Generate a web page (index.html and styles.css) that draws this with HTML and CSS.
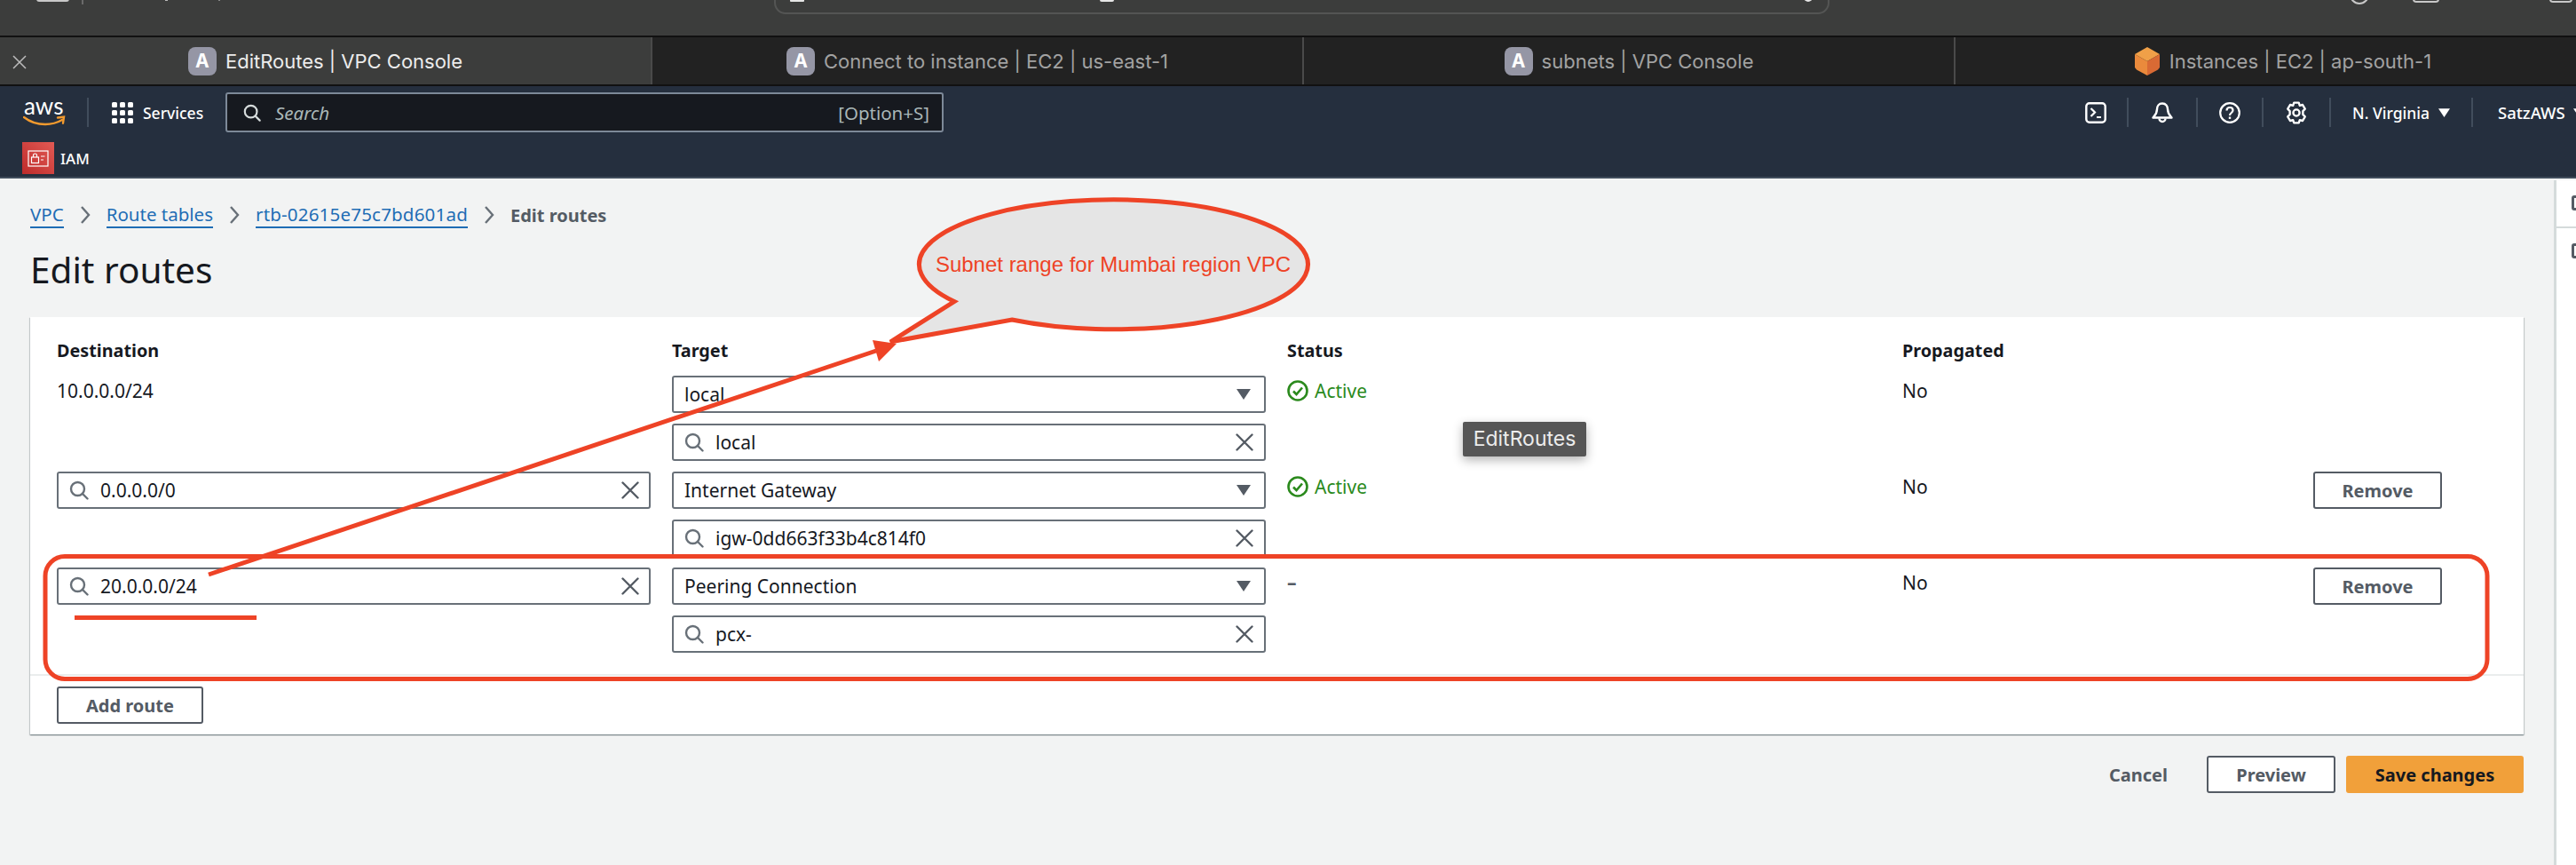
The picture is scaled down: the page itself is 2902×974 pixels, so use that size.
FILE: index.html
```html
<!DOCTYPE html>
<html lang="en">
<head>
<meta charset="utf-8">
<title>EditRoutes | VPC Console</title>
<link rel="stylesheet" href="styles.css">
</head>
<body>
<svg class="defs" width="0" height="0" aria-hidden="true">
  <symbol id="i-search" viewBox="0 0 22 22"><circle cx="9.5" cy="9.5" r="7.5" fill="none" stroke="currentColor" stroke-width="2.4"/><path d="M15 15l5.5 5.5" fill="none" stroke="currentColor" stroke-width="2.4" stroke-linecap="round"/></symbol>
  <symbol id="i-x" viewBox="0 0 20 20"><path d="M1.5 1.5l17 17M18.500 1.500l-17 17" fill="none" stroke="currentColor" stroke-width="2.400" stroke-linecap="round"/></symbol>
  <symbol id="i-caret" viewBox="0 0 16 12"><path d="M0 0h16l-8 12z" fill="currentColor"/></symbol>
  <symbol id="i-chev" viewBox="0 0 12 20"><path d="M2 1l8 9-8 9" fill="none" stroke="currentColor" stroke-width="2.400"/></symbol>
  <symbol id="i-ok" viewBox="0 0 24 24"><circle cx="12" cy="12" r="10.500" fill="none" stroke="currentColor" stroke-width="2.600"/><path d="M7 12.500l3.500 3.500 6.500-7.500" fill="none" stroke="currentColor" stroke-width="2.600"/></symbol>
</svg>

<div class="chrome">
  <svg class="chrome-bits" width="2902" height="40" viewBox="0 0 2902 40" aria-hidden="true">
    <rect x="41" y="-8" width="37" height="10" rx="3" fill="#c8c8c8"/>
    <rect x="92" y="0" width="2" height="5" fill="#6a6a6a"/>
    <rect x="186" y="0" width="3" height="1" fill="#bbb"/>
    <rect x="246" y="0" width="2" height="1" fill="#888"/>
    <path d="M873 0v3a12 12 0 0 0 12 12h1163a12 12 0 0 0 12-12v-3" fill="none" stroke="#545554" stroke-width="2"/>
    <rect x="890" y="-8" width="16" height="10" rx="1" fill="#e6e6e6"/>
    <rect x="1239" y="-8" width="16" height="10" rx="2" fill="#e6e6e6"/>
    <circle cx="2037" cy="-3" r="5" fill="#e6e6e6"/>
    <circle cx="2658" cy="-6" r="10" fill="none" stroke="#c8c8c8" stroke-width="2"/>
    <rect x="2719" y="-14" width="28" height="16" rx="3" fill="none" stroke="#c8c8c8" stroke-width="2"/>
    <rect x="2873" y="-14" width="24" height="16" rx="3" fill="none" stroke="#c8c8c8" stroke-width="2"/>
  </svg>
</div>

<nav class="tabs">
  <div class="tab tab-active">
    <svg class="tab-close" width="16" height="16" viewBox="0 0 16 16" aria-hidden="true"><path d="M1 1l14 14M15 1L1 15" fill="none" stroke="#bdbdbd" stroke-width="1.500"/></svg>
    <span class="tab-a">A</span><span>EditRoutes | VPC Console</span>
  </div>
  <div class="tab"><span class="tab-a">A</span><span>Connect to instance | EC2 | us-east-1</span></div>
  <div class="tab"><span class="tab-a">A</span><span>subnets | VPC Console</span></div>
  <div class="tab">
    <svg class="tab-cube" width="30" height="32" viewBox="0 0 30 32" aria-hidden="true"><path d="M15 0l14 8-14 8L1 8z" fill="#f0a048"/><path d="M1 8l14 8v16L3 25.500 1 23z" fill="#ea8a3c"/><path d="M29 8L15 16v16l12-6.500 2-2.500z" fill="#d96a34"/></svg>
    <span>Instances | EC2 | ap-south-1</span>
  </div>
</nav>

<header class="topnav">
  <div class="topnav-main">
    <svg class="aws-logo" width="48" height="44" viewBox="0 0 48 44" aria-hidden="true">
      <text x="1" y="23" class="aws-word">aws</text>
      <path d="M1 26c7 5.500 16 8 24 8 7 0 13-1.500 19-5" fill="none" stroke="#f29a2e" stroke-width="2.400" stroke-linecap="round"/>
      <path d="M39 26.500l7-.8-1 7" fill="none" stroke="#f29a2e" stroke-width="2.400" stroke-linecap="round"/>
    </svg>
    <span class="nav-rule nav-rule-logo"></span>
    <div class="services">
      <svg width="24" height="24" viewBox="0 0 24 24" aria-hidden="true" fill="#fff">
        <rect x="0" y="0" width="6" height="6" rx="1.500"/><rect x="9" y="0" width="6" height="6" rx="1.500"/><rect x="18" y="0" width="6" height="6" rx="1.500"/>
        <rect x="0" y="9" width="6" height="6" rx="1.500"/><rect x="9" y="9" width="6" height="6" rx="1.500"/><rect x="18" y="9" width="6" height="6" rx="1.500"/>
        <rect x="0" y="18" width="6" height="6" rx="1.500"/><rect x="9" y="18" width="6" height="6" rx="1.500"/><rect x="18" y="18" width="6" height="6" rx="1.500"/>
      </svg>
      <span>Services</span>
    </div>
    <div class="nav-search">
      <svg class="nav-search-icon" width="20" height="20" aria-hidden="true"><use href="#i-search"/></svg>
      <span class="nav-search-hint">Search</span>
      <span class="nav-search-key">[Option+S]</span>
    </div>
    <div class="nav-right">
      <div class="nav-cell nav-cell-1">
        <svg width="24" height="24" viewBox="0 0 24 24" aria-hidden="true"><rect x="1.300" y="1.300" width="21.400" height="21.400" rx="3.500" fill="none" stroke="#fff" stroke-width="2.400"/><path d="M6.500 7l4.500 4.500-4.500 4.500M13 17h5" fill="none" stroke="#fff" stroke-width="2.200"/></svg>
      </div>
      <div class="nav-cell nav-cell-2">
        <svg width="24" height="24" viewBox="0 0 24 24" aria-hidden="true"><path d="M12 1.500c-4 0-6 3-6 6.500 0 5-2.500 7-4.500 9.500h21c-2-2.500-4.500-4.500-4.500-9.500 0-3.500-2-6.500-6-6.500z" fill="none" stroke="#fff" stroke-width="2.400" stroke-linejoin="round"/><path d="M8.500 18.500a3.500 3.500 0 0 0 7 0" fill="none" stroke="#fff" stroke-width="2.400"/></svg>
      </div>
      <div class="nav-cell nav-cell-3">
        <svg width="24" height="24" viewBox="0 0 24 24" aria-hidden="true"><circle cx="12" cy="12" r="10.800" fill="none" stroke="#fff" stroke-width="2.200"/><path d="M8.500 9.500c0-2.200 1.600-3.500 3.500-3.500s3.500 1.300 3.500 3.300c0 2.700-3.500 2.700-3.500 5.700" fill="none" stroke="#fff" stroke-width="2.200"/><rect x="10.800" y="16.500" width="2.400" height="2.400" fill="#fff"/></svg>
      </div>
      <div class="nav-cell nav-cell-4">
        <svg width="26" height="26" viewBox="0 0 24 24" aria-hidden="true"><path d="M9.500 1.500h5l1 3 3-.8 2.500 4.300-2.200 2.300v3.400l2.200 2.300-2.500 4.300-3-.8-1 3h-5l-1-3-3 .8L3 16l2.200-2.300v-3.400L3 8l2.500-4.300 3 .8z" fill="none" stroke="#fff" stroke-width="2.200" stroke-linejoin="round"/><circle cx="12" cy="12" r="3.300" fill="none" stroke="#fff" stroke-width="2.200"/></svg>
      </div>
      <div class="nav-cell nav-cell-region"><span>N. Virginia</span><svg width="13" height="10" aria-hidden="true"><use href="#i-caret"/></svg></div>
      <div class="nav-cell nav-cell-user"><span>SatzAWS</span><svg width="13" height="10" aria-hidden="true"><use href="#i-caret"/></svg></div>
    </div>
  </div>
  <div class="topnav-fav">
    <svg width="36" height="36" viewBox="0 0 36 36" aria-hidden="true">
      <defs><linearGradient id="iam-g" x1="0" y1="1" x2="1" y2="0"><stop offset="0" stop-color="#bd2b2b"/><stop offset="1" stop-color="#e25a54"/></linearGradient></defs>
      <rect width="36" height="36" fill="url(#iam-g)"/>
      <rect x="7" y="10" width="22" height="17" fill="none" stroke="#fff" stroke-width="1.200"/>
      <rect x="10.500" y="17" width="8" height="6.500" fill="none" stroke="#fff" stroke-width="1.200"/>
      <path d="M12.500 17v-2a2 2 0 0 1 4 0v2M21 16h4.500M21 20h3" fill="none" stroke="#fff" stroke-width="1.200"/>
    </svg>
    <span>IAM</span>
  </div>
</header>

<div class="page">
  <main class="content">
    <div class="crumbs">
      <a class="crumb">VPC</a>
      <svg class="chev" width="12" height="20" aria-hidden="true"><use href="#i-chev"/></svg>
      <a class="crumb">Route tables</a>
      <svg class="chev" width="12" height="20" aria-hidden="true"><use href="#i-chev"/></svg>
      <a class="crumb crumb-id">rtb-02615e75c7bd601ad</a>
      <svg class="chev" width="12" height="20" aria-hidden="true"><use href="#i-chev"/></svg>
      <span class="crumb-current">Edit routes</span>
    </div>
    <h1 class="title">Edit routes</h1>

    <section class="card">
      <div class="routes">
        <div class="th">Destination</div>
        <div class="th">Target</div>
        <div class="th">Status</div>
        <div class="th">Propagated</div>

        <div class="td-text">10.0.0.0/24</div>
        <div class="stack">
          <div class="field select"><span>local</span><svg class="caret" width="16" height="12" aria-hidden="true"><use href="#i-caret"/></svg></div>
          <div class="field search"><svg class="mag" width="22" height="22" aria-hidden="true"><use href="#i-search"/></svg><span>local</span><svg class="clear" width="20" height="20" aria-hidden="true"><use href="#i-x"/></svg></div>
        </div>
        <div class="td-text status"><svg width="24" height="24" aria-hidden="true"><use href="#i-ok"/></svg><span>Active</span></div>
        <div class="td-text">No</div>

        <div class="field search dest"><svg class="mag" width="22" height="22" aria-hidden="true"><use href="#i-search"/></svg><span>0.0.0.0/0</span><svg class="clear" width="20" height="20" aria-hidden="true"><use href="#i-x"/></svg></div>
        <div class="stack">
          <div class="field select"><span>Internet Gateway</span><svg class="caret" width="16" height="12" aria-hidden="true"><use href="#i-caret"/></svg></div>
          <div class="field search"><svg class="mag" width="22" height="22" aria-hidden="true"><use href="#i-search"/></svg><span>igw-0dd663f33b4c814f0</span><svg class="clear" width="20" height="20" aria-hidden="true"><use href="#i-x"/></svg></div>
        </div>
        <div class="td-text status"><svg width="24" height="24" aria-hidden="true"><use href="#i-ok"/></svg><span>Active</span></div>
        <div class="td-split"><div class="td-text">No</div><button class="btn">Remove</button></div>

        <div class="field search dest"><svg class="mag" width="22" height="22" aria-hidden="true"><use href="#i-search"/></svg><span>20.0.0.0/24</span><svg class="clear" width="20" height="20" aria-hidden="true"><use href="#i-x"/></svg></div>
        <div class="stack">
          <div class="field select"><span>Peering Connection</span><svg class="caret" width="16" height="12" aria-hidden="true"><use href="#i-caret"/></svg></div>
          <div class="field search"><svg class="mag" width="22" height="22" aria-hidden="true"><use href="#i-search"/></svg><span>pcx-</span><svg class="clear" width="20" height="20" aria-hidden="true"><use href="#i-x"/></svg></div>
        </div>
        <div class="td-text dash">–</div>
        <div class="td-split"><div class="td-text">No</div><button class="btn">Remove</button></div>
      </div>
      <div class="card-foot"><button class="btn btn-add">Add route</button></div>
    </section>

    <div class="actions">
      <span class="cancel">Cancel</span>
      <button class="btn btn-preview">Preview</button>
      <button class="btn btn-save">Save changes</button>
    </div>
  </main>
  <aside class="rail">
    <div class="rail-item"><span class="rail-icon"></span></div>
    <div class="rail-item"><span class="rail-icon rail-icon-2"></span></div>
  </aside>
</div>

<div class="tooltip">EditRoutes</div>

<svg class="annot" width="2902" height="974" viewBox="0 0 2902 974" aria-hidden="false">
  <rect class="a-stroke" x="51" y="626.500" width="2751" height="138" rx="22"/>
  <path class="a-stroke" d="M235 647L987 395"/>
  <path class="a-bubble" d="M1003 385L1075 339.600A219 73 0 1 1 1140 360z"/>
  <path class="a-fill" d="M983 383L1010 387L990 407z"/>
  <rect class="a-fill" x="84" y="693" width="205" height="5"/>
  <text class="a-text" x="1254" y="306" text-anchor="middle">Subnet range for Mumbai region VPC</text>
</svg>
</body>
</html>
```
FILE: styles.css
```css
* { box-sizing: border-box; }
html, body { margin: 0; padding: 0; }
body {
  position: relative;
  width: 2902px;
  height: 974px;
  overflow: hidden;
  background: #f2f3f3;
  font-family: "Noto Sans", "Open Sans", sans-serif;
  font-size: 21px;
  color: #16191f;
}
.defs { position: absolute; }

/* browser chrome */
.chrome { height: 40px; background: #3c3d3c; }
.chrome-bits { display: block; }
.tabs {
  display: flex;
  height: 57px;
  overflow: hidden;
  background: #222;
  border-top: 2px solid #111;
  border-bottom: 2px solid #111;
  font-family: Inter, "Noto Sans", sans-serif;
  font-size: 22px;
  color: #a2a2a2;
}
.tab {
  position: relative;
  flex: 0 0 734px;
  display: flex;
  align-items: center;
  justify-content: center;
  gap: 10px;
  border-left: 2px solid #4a4a4a;
}
.tab:last-child { padding-left: 5px; }
.tab-active {
  flex-basis: 733px;
  background: #3c3d3c;
  color: #ececec;
  border-left: 0;
  margin-top: -2px;
  padding-top: 2px;
}
.tab-close { position: absolute; left: 14px; top: 22px; }
.tab-a {
  display: flex;
  align-items: center;
  justify-content: center;
  width: 32px;
  height: 32px;
  border-radius: 8px;
  background: #9596a5;
  color: #fff;
  font-weight: 700;
  font-size: 21px;
}

/* console header */
.topnav {
  height: 104px;
  background: #252f3e;
  border-bottom: 2px solid #414d5c;
  color: #fff;
  overflow: hidden;
}
.topnav-main {
  display: flex;
  align-items: center;
  height: 59px;
  padding-left: 26px;
  font-size: 17.500px;
}
.aws-logo { flex: none; margin-top: 2px; }
.aws-word { font-family: Lato, "Noto Sans", sans-serif; font-size: 26px; font-weight: 400; fill: #fff; }
.nav-rule { display: block; flex: none; width: 2px; height: 33px; background: #414d5c; }
.nav-rule-logo { margin-left: 24px; }
.services {
  flex: none;
  display: flex;
  align-items: center;
  gap: 11px;
  width: 128px;
  margin-left: 26px;
  font-weight: 500;
}
.nav-search {
  flex: none;
  display: flex;
  align-items: center;
  width: 809px;
  height: 45px;
  padding: 0 14px 0 18px;
  background: #16191f;
  border: 2px solid #7d8998;
  border-radius: 3px;
  color: #d5dbdb;
  font-size: 20.500px;
}
.nav-search-icon { flex: none; }
.nav-search-hint { margin-left: 16px; font-style: italic; color: #aab7b8; }
.nav-search-key { margin-left: auto; color: #aab7b8; }
.nav-right { flex: none; display: flex; align-items: center; margin-left: 1263px; }
.nav-cell {
  display: flex;
  align-items: center;
  justify-content: center;
  height: 33px;
  border-right: 2px solid #414d5c;
}
.nav-cell-1 { width: 72px; }
.nav-cell-2 { width: 78px; }
.nav-cell-3 { width: 74px; }
.nav-cell-4 { width: 76px; }
.nav-cell-region { width: 160px; gap: 10px; font-weight: 500; }
.nav-cell-user { justify-content: flex-start; gap: 9px; padding-left: 28px; border-right: 0; font-size: 18.500px; font-weight: 500; }
.nav-cell svg { flex: none; }
.topnav-fav {
  display: flex;
  align-items: center;
  gap: 7px;
  padding: 4px 0 0 25px;
  font-size: 17px;
  font-weight: 500;
}

/* page */
.page { display: flex; height: 773px; }
.content { flex: 1; min-width: 0; padding: 26px 34px 0; }
.crumbs { display: flex; align-items: center; gap: 18px; height: 30px; font-size: 20.500px; }
.crumb { height: 30px; line-height: 28px; color: #1f6db5; border-bottom: 2px solid #1f6db5; }
.crumb-id { letter-spacing: .2px; }
.chev { flex: none; color: #687078; }
.crumb-current { color: #545b64; font-weight: 700; font-size: 20px; }
.title { margin: 20px 0 26px; font-size: 40.500px; line-height: 54px; font-weight: 400; }
.card {
  width: 2809px;
  background: #fff;
  box-shadow: 0 1px 1px 0 rgba(0, 28, 36, .3), 1px 1px 1px 0 rgba(0, 28, 36, .15), -1px 1px 1px 0 rgba(0, 28, 36, .15);
}
.routes {
  display: grid;
  grid-template-columns: repeat(4, 669px);
  column-gap: 24px;
  row-gap: 12px;
  padding: 25px 0 24px 30px;
  border-bottom: 2px solid #eaeded;
}
.th { height: 26px; margin-bottom: 3px; font-size: 19.800px; line-height: 26px; font-weight: 700; }
.td-text { padding-top: 4px; line-height: 26px; }
.stack { display: flex; flex-direction: column; gap: 12px; }
.field {
  display: flex;
  align-items: center;
  height: 42px;
  padding: 0 12px;
  background: #fff;
  border: 2px solid #687078;
  border-radius: 3px;
}
.dest { padding-right: 11px; }
.select .caret { margin-left: auto; margin-right: 3px; color: #545b64; }
.search .mag { flex: none; color: #687078; }
.search .clear { flex: none; margin-left: auto; color: #545b64; }
.search span { margin-left: 13px; }
.status { display: flex; align-items: flex-start; gap: 7px; color: #2b8a1d; }
.status svg { flex: none; margin-top: 1px; }
.dash { font-weight: 700; color: #545b64; }
.td-split { display: flex; justify-content: space-between; padding-right: 61px; }
.btn {
  display: block;
  height: 42px;
  padding: 0;
  background: #fff;
  border: 2px solid #545b64;
  border-radius: 3px;
  color: #545b64;
  font: 700 20px "Noto Sans", "Open Sans", sans-serif;
  width: 145px;
}
.card-foot { padding: 12px 0 12px 30px; }
.btn-add { width: 165px; }
.actions { display: flex; align-items: center; justify-content: flex-end; width: 2809px; margin-top: 24px; }
.cancel { margin-right: 44px; font-size: 20px; font-weight: 700; color: #545b64; }
.btn-save { width: 200px; margin-left: 12px; background: #f1a03a; border-color: #f1a03a; color: #16191f; }

/* right rail */
.rail { flex: none; width: 25px; margin-top: 2px; background: #fff; border-left: 3px solid #d5dbdb; }
.rail-item { height: 54px; padding: 17px 0 0 17px; border-bottom: 2px solid #d5dbdb; }
.rail-item + .rail-item { border-bottom: 0; }
.rail-icon { display: block; width: 16px; height: 17px; border: 3px solid #545b64; border-radius: 3px; }

/* overlays */
.tooltip {
  position: absolute;
  left: 1648px;
  top: 475px;
  width: 139px;
  height: 39px;
  background: #565656;
  border-radius: 2px;
  box-shadow: 0 4px 12px rgba(0, 0, 0, .3);
  color: #ececec;
  font: 23px/39px Inter, "Noto Sans", sans-serif;
  text-align: center;
}
.annot { position: absolute; left: 0; top: 0; pointer-events: none; }
.a-stroke { fill: none; stroke: #ee4326; stroke-width: 5; }
.a-fill { fill: #ee4326; }
.a-bubble { fill: #e5e5e5; stroke: #ee4326; stroke-width: 5; stroke-linejoin: miter; }
.a-text { fill: #ee4326; font-family: "Liberation Sans", Arial, sans-serif; font-size: 24px; }
```
